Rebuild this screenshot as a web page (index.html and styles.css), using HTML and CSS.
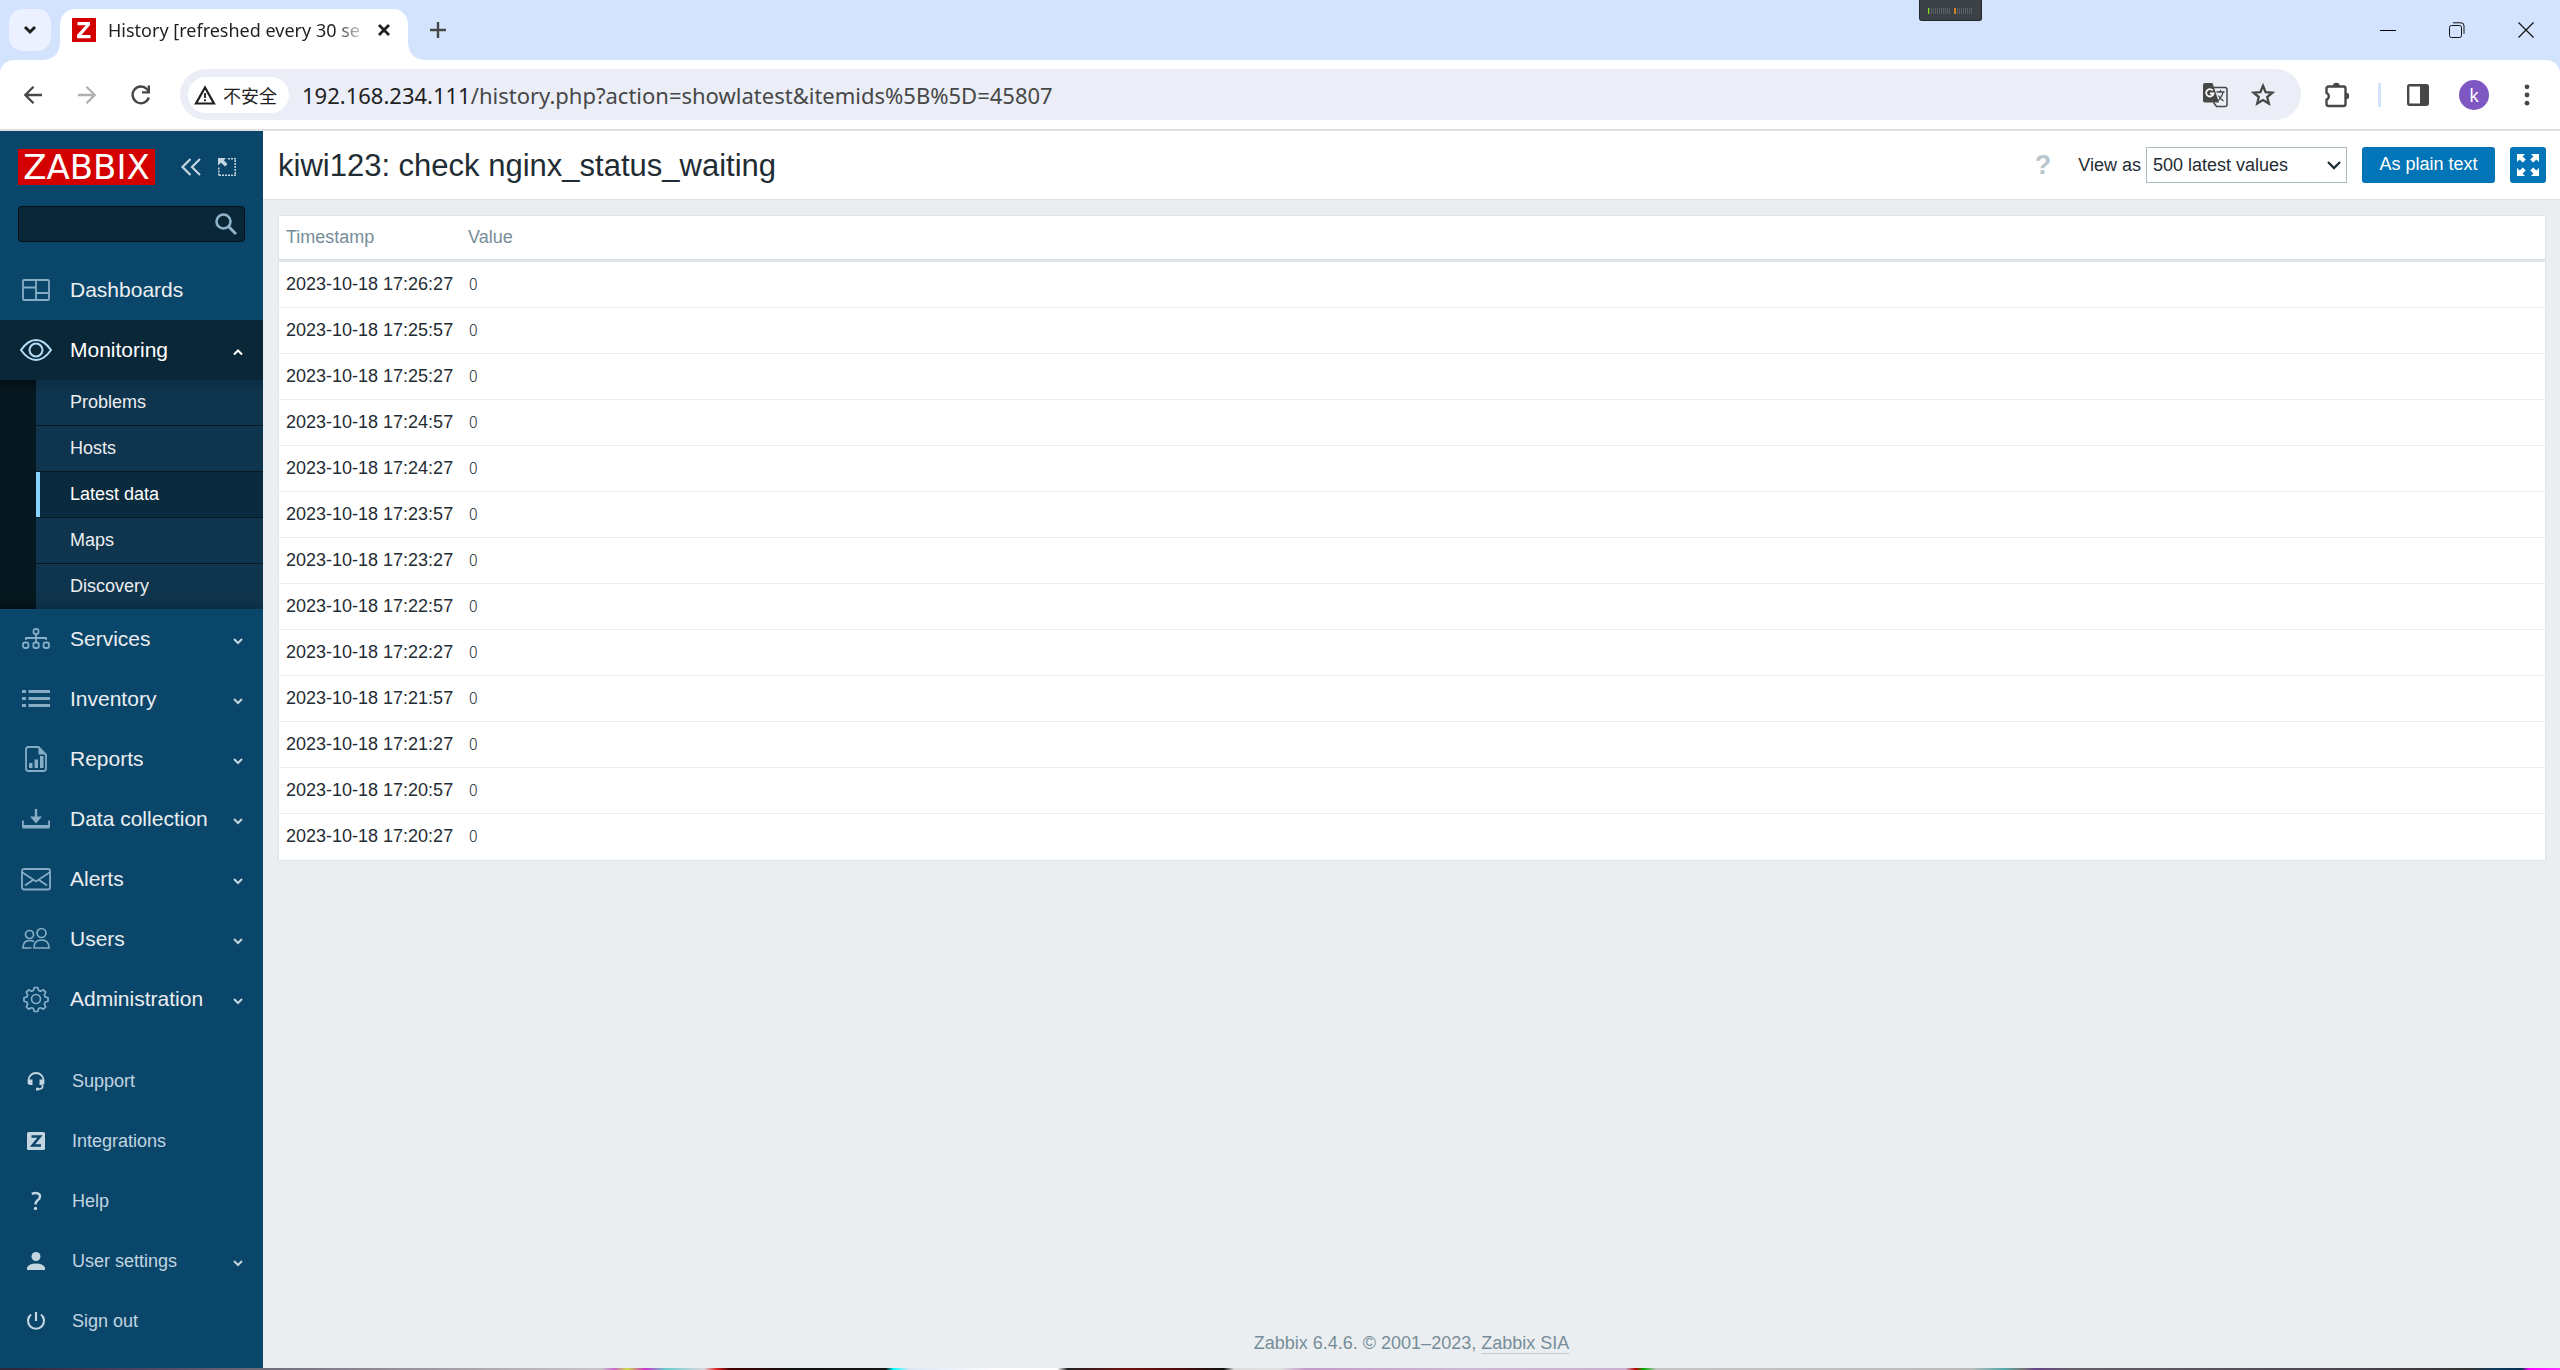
FILE: index.html
```html
<!DOCTYPE html>
<html lang="zh-CN">
<head>
<meta charset="utf-8">
<title>History [refreshed every 30 sec.]</title>
<link rel="stylesheet" href="styles.css">
</head>
<body>
<header class="tabstrip">
  <button class="tab-search" aria-label="Search tabs"><svg width="16" height="16" viewBox="0 0 16 16"><path d="M3 5l5 5 5-5" fill="none" stroke="#1f1f1f" stroke-width="3"/></svg></button>
  <div class="tab">
    <svg class="favicon" width="24" height="24" viewBox="0 0 24 24"><path fill="#d40000" d="M0 0h24v24H0z"/><path fill="#fff" d="M5.500 4h12.500v3L9.500 17H18.500v3.200H5v-3.200L13.700 7.200H5.500z"/></svg>
    <span class="tab-title">History [refreshed every 30 se</span>
    <button class="tab-close" aria-label="Close tab"><svg width="14" height="14" viewBox="0 0 14 14"><path d="M2 2l10 10M12 2L2 12" stroke="#1f1f1f" stroke-width="2.800"/></svg></button>
  </div>
  <button class="new-tab" aria-label="New tab"><svg width="16" height="16" viewBox="0 0 16 16"><path d="M8 0v16M0 8h16" stroke="#474747" stroke-width="2.400"/></svg></button>
  <div class="window-controls">
    <button aria-label="Minimize"><svg width="16" height="16" viewBox="0 0 16 16"><path d="M0 8.500h16" stroke="#000"/></svg></button>
    <button aria-label="Restore"><svg width="16" height="16" viewBox="0 0 16 16"><g fill="none" stroke="#111"><rect x=".5" y="3.500" width="12" height="12" rx="2"/><path d="M4 .8h8q3 0 3 3v8"/></g></svg></button>
    <button aria-label="Close"><svg width="16" height="16" viewBox="0 0 16 16"><path d="M.5.5l15 15M15.500.5l-15 15" stroke="#111" stroke-width="1.200"/></svg></button>
  </div>
  <div class="meter"><svg width="46" height="6" viewBox="0 0 46 6"><path d="M3.500 0v6M5.500 0v6M7.500 0v6M9.500 0v6M11.500 0v6M13.500 0v6M15.500 0v6M17.500 0v6M19.500 0v6M21.500 0v6M29.500 0v6M31.500 0v6M33.500 0v6M35.500 0v6M37.500 0v6M39.500 0v6M41.500 0v6M43.500 0v6" stroke="#5b6067"/><path d="M.5 0v6" stroke="#86e01e" stroke-width="1.500"/><path d="M27 0v6" stroke="#ff9d1c" stroke-width="1.500"/></svg></div>
</header>

<div class="toolbar-wrap">
<div class="toolbar">
  <button aria-label="Back"><svg width="20" height="20" viewBox="0 0 20 20"><path d="M19 10H2.500M10.500 1.800L2.300 10l8.200 8.200" fill="none" stroke="#474747" stroke-width="2.300"/></svg></button>
  <button aria-label="Forward"><svg width="20" height="20" viewBox="0 0 20 20"><path d="M1 10h16.500M9.500 1.800l8.200 8.200-8.200 8.200" fill="none" stroke="#b0b0b0" stroke-width="2.300"/></svg></button>
  <button aria-label="Reload"><svg width="20" height="20" viewBox="0 0 20 20"><path d="M17.800 12.500A8.300 8.300 0 1 1 16 4.200L18 6.500" fill="none" stroke="#474747" stroke-width="2.400"/><path d="M19 .5v8h-8V6.200h5.600V.5z" fill="#474747"/></svg></button>
  <div class="omnibox">
    <button class="site-info"><svg width="22" height="20" viewBox="0 0 22 20"><path d="M11 2.500L20 18.500H2z" fill="none" stroke="#1f1f1f" stroke-width="2.200"/><path d="M11 8v5M11 14.300v2" stroke="#1f1f1f" stroke-width="1.800"/></svg>不安全</button>
    <div class="url"><b>192.168.234.111</b>/history.php?action=showlatest&amp;itemids%5B%5D=45807</div>
    <button aria-label="Translate"><svg width="26" height="26" viewBox="0 0 26 26"><path d="M3 1h7.500l6.500 19.500H3q-2 0-2-2V3q0-2 2-2z" fill="#474747"/><path d="M11.500 5.500H23q2 0 2 2v15q0 2-2 2h-8.500l-3-4" fill="none" stroke="#474747" stroke-width="1.500"/><path d="M10.800 8.500A3.700 3.700 0 1 0 11.500 11.500H8" fill="none" stroke="#fff" stroke-width="1.800"/><path d="M14.500 10h8M18.500 8v2M21 10c-.7 4-3 7-5.500 9M16.500 13.500c1 2.300 2.500 4 5 5.500" fill="none" stroke="#474747" stroke-width="1.300"/></svg></button>
    <button aria-label="Bookmark"><svg width="24" height="24" viewBox="0 0 24 24"><path d="M12 2.800l2.600 6.300 6.800.5-5.200 4.400 1.600 6.600L12 17.100l-5.800 3.500L7.800 14 2.600 9.600l6.800-.5z" fill="none" stroke="#474747" stroke-width="2.300"/></svg></button>
  </div>
  <button class="extensions" aria-label="Extensions"><svg width="26" height="26" viewBox="0 0 26 26"><path d="M4.500 4.500h15q2 0 2 2V22q0 2-2 2h-15q-2 0-2-2v-4.300a3.600 3.600 0 0 0 0-6.700V6.500q0-2 2-2z" fill="none" stroke="#474747" stroke-width="2.400"/><path d="M9 4a3.300 3.300 0 0 1 6.600 0zM22 10.800a3.200 3.200 0 0 1 0 6.400z" fill="#474747"/></svg></button>
  <span class="divider"></span>
  <button aria-label="Side panel"><svg width="22" height="22" viewBox="0 0 22 22"><rect x="1.200" y="1.200" width="19.600" height="19.600" rx="1.500" fill="none" stroke="#474747" stroke-width="2.400"/><path d="M13 1h8v20h-8z" fill="#474747"/></svg></button>
  <button class="avatar">k</button>
  <button aria-label="Menu"><svg width="6" height="22" viewBox="0 0 6 22"><g fill="#474747"><circle cx="3" cy="2.800" r="2.400"/><circle cx="3" cy="11" r="2.400"/><circle cx="3" cy="19.200" r="2.400"/></g></svg></button>
</div>
</div>

<div class="app">
<aside class="sidebar">
  <div class="brand">
    <a class="logo" href="#">ZABBIX</a>
    <button aria-label="Collapse sidebar"><svg width="22" height="18" viewBox="0 0 22 18"><path d="M10.500 1l-8 8 8 8M20 1l-8 8 8 8" fill="none" stroke="#c3d5e0" stroke-width="2.200"/></svg></button>
    <button aria-label="Hide sidebar"><svg width="18" height="18" viewBox="0 0 18 18"><path d="M0 0h8L5.800 2.200 9.500 6 7 8.500 3 4.800 0 7.500z" fill="#c3d5e0"/><path d="M10 .8h8M17.200 2v16M18 17.200H0M.8 9.500V18" fill="none" stroke="#c3d5e0" stroke-width="1.500" stroke-dasharray="2 1"/></svg></button>
  </div>
  <form class="search">
    <input type="text" aria-label="Search">
    <button type="button" aria-label="Search"><svg width="22" height="22" viewBox="0 0 22 22"><circle cx="8.500" cy="8.500" r="7" fill="none" stroke="#8fb3cb" stroke-width="2.600"/><path d="M13.500 13.500l7.500 7.500" stroke="#8fb3cb" stroke-width="3"/></svg></button>
  </form>
  <nav class="menu">
    <a href="#"><svg class="icon" viewBox="0 0 32 32"><g fill="none" stroke="#86adc6" stroke-width="1.800"><rect x="3" y="6" width="26" height="20" rx="1"/><path d="M16 6v20M3 13.500h13M16 19h13"/></g></svg><span>Dashboards</span></a>
    <a href="#" class="open"><svg class="icon" viewBox="0 0 32 32"><g fill="none" stroke="#b2dcf5" stroke-width="2.100"><path d="M1 16Q8 6 16 6t15 10Q24 26 16 26T1 16z"/><circle cx="16" cy="16" r="6.500"/></g></svg><span>Monitoring</span><svg class="caret" viewBox="0 0 10 8"><path d="M1 6.500l4-4 4 4"/></svg></a>
    <ul class="submenu">
      <li><a href="#">Problems</a></li>
      <li><a href="#">Hosts</a></li>
      <li><a href="#" class="selected">Latest data</a></li>
      <li><a href="#">Maps</a></li>
      <li><a href="#">Discovery</a></li>
    </ul>
    <a href="#"><svg class="icon" viewBox="0 0 32 32"><g fill="none" stroke="#86adc6" stroke-width="1.800"><rect x="13.500" y="6" width="5" height="5" rx="2"/><rect x="3" y="19.500" width="5.500" height="5.500" rx="2"/><rect x="13.300" y="19.500" width="5.500" height="5.500" rx="2"/><rect x="23.500" y="19.500" width="5.500" height="5.500" rx="2"/><path d="M16 11v8M6 17v-2h20v2"/></g></svg><span>Services</span><svg class="caret" viewBox="0 0 10 8"><path d="M1 2l4 4 4-4"/></svg></a>
    <a href="#"><svg class="icon" viewBox="0 0 32 32"><path d="M2 8.500h4M2 15.500h4M2 22.500h4M8.500 8.500H30M8.500 15.500H30M8.500 22.500H30" stroke="#86adc6" stroke-width="3"/></svg><span>Inventory</span><svg class="caret" viewBox="0 0 10 8"><path d="M1 2l4 4 4-4"/></svg></a>
    <a href="#"><svg class="icon" viewBox="0 0 32 32"><path d="M18.500 4H8.500q-2.500 0-2.500 2.500v19q0 2.500 2.500 2.500h15q2.500 0 2.500-2.500v-14z" fill="none" stroke="#86adc6" stroke-width="1.800"/><path d="M18.500 4v7.500H26zM9 20h3.500v5H9zM14.500 16.500H18V25h-3.500zM20 13h3.500v12H20z" fill="#86adc6"/></svg><span>Reports</span><svg class="caret" viewBox="0 0 10 8"><path d="M1 2l4 4 4-4"/></svg></a>
    <a href="#"><svg class="icon" viewBox="0 0 32 32"><path d="M14.800 6h2.400v7.500H22l-6 7-6-7h4.800zM2 17.500h1.800v4.500h24.400v-4.500H30V24q0 1.500-1.500 1.500h-25Q2 25.500 2 24z" fill="#86adc6"/></svg><span>Data collection</span><svg class="caret" viewBox="0 0 10 8"><path d="M1 2l4 4 4-4"/></svg></a>
    <a href="#"><svg class="icon" viewBox="0 0 32 32"><g fill="none" stroke="#86adc6" stroke-width="1.800"><rect x="2" y="6" width="28" height="20.500" rx="2"/><path d="M2.500 9.500L16 18.500 29.500 9.500M5 22.500l8-5.500M27 22.500L19 17"/></g></svg><span>Alerts</span><svg class="caret" viewBox="0 0 10 8"><path d="M1 2l4 4 4-4"/></svg></a>
    <a href="#"><svg class="icon" viewBox="0 0 32 32"><g fill="none" stroke="#86adc6" stroke-width="1.700"><circle cx="9.500" cy="11.500" r="4"/><circle cx="21.500" cy="10" r="4.500"/><path d="M14 25h15q0-8-7.500-8T14 25zM11.500 25H3q0-7.500 6.500-7.500 2.500 0 4.500 1"/></g></svg><span>Users</span><svg class="caret" viewBox="0 0 10 8"><path d="M1 2l4 4 4-4"/></svg></a>
    <a href="#"><svg class="icon" viewBox="0 0 32 32"><g fill="none" stroke="#86adc6" stroke-width="1.700"><circle cx="16" cy="16" r="4.500"/><path d="M14.300 5h3.400l.9 2.900 2 .8 2.700-1.400 2.400 2.400-1.400 2.700.8 2 2.900.9v3.400l-2.900.9-.8 2 1.400 2.700-2.400 2.400-2.700-1.400-2 .8-.9 2.900h-3.400l-.9-2.900-2-.8-2.700 1.400-2.400-2.400 1.400-2.700-.8-2-2.900-.9v-3.400l2.900-.9.8-2-1.400-2.700 2.400-2.400 2.700 1.400 2-.8z" transform="translate(0 -.5)" stroke-linejoin="round"/></g></svg><span>Administration</span><svg class="caret" viewBox="0 0 10 8"><path d="M1 2l4 4 4-4"/></svg></a>
  </nav>
  <nav class="menu user-menu">
    <a href="#"><svg class="icon" viewBox="0 0 32 32"><path d="M8.500 19v-3.500a7.500 7.500 0 0 1 15 0V19M22.500 20v2q0 2-5 2.200" fill="none" stroke="#c3d5e0" stroke-width="1.800"/><path d="M8 14.500h4.500V20H10q-2 0-2-2zM24 14.500h-4.500V20H22q2 0 2-2zM16 22.800h3v2.600h-3z" fill="#c3d5e0"/></svg><span>Support</span></a>
    <a href="#"><svg class="icon" viewBox="0 0 32 32"><rect x="7" y="7" width="18" height="18" rx="1.500" fill="#c3d5e0"/><path d="M11.500 11.500h8.500L12.500 20.500H21" fill="none" stroke="#0a466a" stroke-width="2.500"/></svg><span>Integrations</span></a>
    <a href="#"><svg class="icon" viewBox="0 0 32 32"><path d="M11.800 9Q14 7.800 16 8q4 .3 4 3.600 0 2-2.300 3.700-2.100 1.700-2.100 4.200" fill="none" stroke="#c3d5e0" stroke-width="2.400"/><circle cx="15.500" cy="23.500" r="1.700" fill="#c3d5e0"/></svg><span>Help</span></a>
    <a href="#"><svg class="icon" viewBox="0 0 32 32"><circle cx="16" cy="11.500" r="4.500" fill="#c3d5e0"/><path d="M7 25v-2.500Q9 18.500 16 18.500t9 4V25z" fill="#c3d5e0"/></svg><span>User settings</span><svg class="caret" viewBox="0 0 10 8"><path d="M1 2l4 4 4-4"/></svg></a>
    <a href="#"><svg class="icon" viewBox="0 0 32 32"><path d="M11 9.500a8 8 0 1 0 10 0" fill="none" stroke="#c3d5e0" stroke-width="2.100"/><path d="M16 7v9" stroke="#c3d5e0" stroke-width="2.200"/></svg><span>Sign out</span></a>
  </nav>
</aside>

<main class="main">
  <div class="page-header">
    <h1>kiwi123: check nginx_status_waiting</h1>
    <form class="controls">
      <a class="help" href="#" aria-label="Help">?</a>
      <label for="view-as">View as</label>
      <span class="select"><select id="view-as"><option>500 latest values</option></select><svg width="16" height="12" viewBox="0 0 16 12"><path d="M2 3l6 6 6-6" fill="none" stroke="#1f2c33" stroke-width="2.300"/></svg></span>
      <button type="button" class="btn">As plain text</button>
      <button type="button" class="btn kiosk" aria-label="Kiosk mode"><svg width="22" height="22" viewBox="0 0 22 22"><path fill="#fff" d="M0 0h8L5.600 2.400 8.800 5.600 5.800 8.600 2.600 5.400 0 8zM22 0v8L19.400 5.400 16.200 8.600 13.200 5.600 16.400 2.400 14 0zM0 22v-8l2.600 2.600 3.200-3.200 3 3L5.600 19.600 8 22zM22 22h-8l2.400-2.400-3.200-3.200 3-3 3.200 3.200L22 14z"/></svg></button>
    </form>
  </div>
  <table class="history">
    <thead><tr><th class="time">Timestamp</th><th>Value</th></tr></thead>
    <tbody>
      <tr><td>2023-10-18 17:26:27</td><td class="value">0</td></tr>
      <tr><td>2023-10-18 17:25:57</td><td class="value">0</td></tr>
      <tr><td>2023-10-18 17:25:27</td><td class="value">0</td></tr>
      <tr><td>2023-10-18 17:24:57</td><td class="value">0</td></tr>
      <tr><td>2023-10-18 17:24:27</td><td class="value">0</td></tr>
      <tr><td>2023-10-18 17:23:57</td><td class="value">0</td></tr>
      <tr><td>2023-10-18 17:23:27</td><td class="value">0</td></tr>
      <tr><td>2023-10-18 17:22:57</td><td class="value">0</td></tr>
      <tr><td>2023-10-18 17:22:27</td><td class="value">0</td></tr>
      <tr><td>2023-10-18 17:21:57</td><td class="value">0</td></tr>
      <tr><td>2023-10-18 17:21:27</td><td class="value">0</td></tr>
      <tr><td>2023-10-18 17:20:57</td><td class="value">0</td></tr>
      <tr><td>2023-10-18 17:20:27</td><td class="value">0</td></tr>
    </tbody>
  </table>
  <footer class="footer">Zabbix 6.4.6. © 2001–2023, <a href="#">Zabbix SIA</a></footer>
</main>
</div>
<div class="desktop-edge"></div>
</body>
</html>
```
FILE: styles.css
```css
* { box-sizing: border-box; }
body {
  margin: 0;
  min-height: 100vh;
  display: flex;
  flex-direction: column;
  font: 18px/24px "Liberation Sans", Arial, sans-serif;
  color: #1f2c33;
  background: #ebeef0;
}
button { border: 0; padding: 0; background: none; font: inherit; color: inherit; display: flex; align-items: center; justify-content: center; }
a { text-decoration: none; color: inherit; }
svg { display: block; flex: none; }

/* Browser tab strip */
.tabstrip {
  position: relative;
  display: flex;
  height: 60px;
  padding: 9px 0 0 9px;
  background: #d3e3fd;
  font-family: "Noto Sans", "Noto Sans CJK SC", sans-serif;
}
.tab-search { width: 42px; height: 42px; border-radius: 14px; background: #ebf1fe; }
.tab {
  position: relative;
  display: flex;
  align-items: center;
  width: 348px;
  margin-left: 9px;
  padding: 0 17px 9px 12px;
  border-radius: 15px 15px 0 0;
  background: #fff;
}
.tab::before, .tab::after { content: ""; position: absolute; bottom: 0; width: 15px; height: 15px; }
.tab::before { right: 100%; background: radial-gradient(circle at 0 0, transparent 14px, #fff 15px); }
.tab::after { left: 100%; background: radial-gradient(circle at 100% 0, transparent 14px, #fff 15px); }
.tab-title {
  flex: 1;
  margin: 0 12px;
  white-space: nowrap;
  color: transparent;
  background: linear-gradient(90deg, #1f1f1f 88%, #e8e8e8);
  -webkit-background-clip: text;
  background-clip: text;
}
.new-tab { width: 60px; height: 42px; }
.window-controls { display: flex; margin-left: auto; }
.window-controls button { width: 69px; height: 42px; }
.meter {
  position: absolute;
  left: 75%;
  top: 0;
  width: 63px;
  height: 21px;
  margin-left: -1px;
  padding: 8px;
  border: solid #24272c;
  border-width: 0 1px 1px;
  border-radius: 0 0 3px 3px;
  background: #3c4047;
}

/* Browser toolbar */
.toolbar-wrap { background: #d3e3fd; }
.toolbar {
  display: flex;
  align-items: center;
  height: 71px;
  padding: 0 30px 0 23px;
  border-bottom: 2px solid #e0e0e0;
  border-radius: 14px 14px 0 0;
  background: #fff;
  gap: 34px;
  font-family: "Noto Sans", "Noto Sans CJK SC", sans-serif;
}
.omnibox {
  flex: 1;
  display: flex;
  align-items: center;
  height: 51px;
  margin-left: -5px;
  padding: 0 26px 0 8px;
  border-radius: 26px;
  background: #ebeef7;
  gap: 23px;
}
.site-info { height: 36px; padding: 0 12px 0 6px; gap: 7px; border-radius: 18px; background: #fff; color: #1f1f1f; font-family: "Noto Sans CJK SC", sans-serif; }
.url { flex: 1; margin-left: -10px; font-size: 22px; color: #474747; white-space: nowrap; }
.url b { font-weight: normal; color: #1f1f1f; }
.extensions { margin-left: -11px; }
.divider { width: 3px; height: 24px; margin: 0 -8px 0 -6px; background: #d3e3fd; }
.avatar { width: 30px; height: 30px; margin: 0 1px 0 -4px; border-radius: 50%; background: #7e57c2; color: #fff; }

/* Sidebar */
.app { flex: 1; display: flex; }
.sidebar { width: 263px; padding-top: 18px; display: flex; flex-direction: column; background: #0a466a; color: #c3d5e0; }
.brand { display: flex; align-items: center; padding-left: 18px; }
.logo { width: 137px; height: 36px; margin-right: 25px; background: #d40000; color: #fff; font: 34px/36px "DejaVu Sans", sans-serif; text-align: center; }
.brand button + button { margin-left: 16px; }
.search { display: flex; height: 36px; margin: 21px 18px 18px; padding-right: 7px; border: 1px solid #040e14; border-radius: 4px; background: #0a2737; }
.search input { flex: 1; min-width: 0; border: 0; background: none; color: #fff; font: inherit; outline: 0; }
.menu > a { display: flex; align-items: center; height: 60px; padding: 0 20px; color: #ebeef0; font-size: 21px; }
.menu > a span { flex: 1; margin-left: 18px; }
.menu > a.open { background: #0a2737; color: #fff; }
.icon { width: 32px; height: 32px; }
.caret { width: 10px; height: 8px; margin-top: 4px; fill: none; stroke: #c3d5e0; stroke-width: 2; }
.open .caret { stroke: #fff; }
.submenu { margin: 0; padding: 0 0 0 36px; list-style: none; background: linear-gradient(#040f16, #05171f 12px, #05171f 217px, #040f16); }
.submenu li + li { border-top: 1px solid #05171f; }
.submenu a { display: block; height: 45px; padding-left: 30px; border-left: 4px solid transparent; background: #0f344d; color: #ebeef0; line-height: 45px; }
.submenu li:first-child a { background: linear-gradient(#0d2e44, #0f344d 12px); background-origin: border-box; }
.submenu li:last-child a { background: linear-gradient(#0f344d 33px, #0d2e44); background-origin: border-box; }
.submenu a.selected { border-left-color: #87d2ff; background: #0a2a3d; color: #fff; }
.user-menu { margin-top: auto; padding: 22px 0 17px; }
.user-menu > a { color: #c3d5e0; font-size: 18px; }
.user-menu > a span { margin-left: 20px; }

/* Page */
.main { flex: 1; display: flex; flex-direction: column; }
.page-header { display: flex; align-items: center; justify-content: space-between; height: 69px; padding: 0 14px 0 15px; border-bottom: 1px solid #dfe4e7; background: #fff; }
h1 { margin: 0; padding-top: 2px; font-size: 31px; font-weight: normal; line-height: 36px; }
.controls { display: flex; align-items: center; }
.help { margin-right: 27px; color: #b9c5cc; font-size: 27px; font-weight: bold; }
.select { position: relative; margin: 0 15px 0 5px; }
.select select { display: block; width: 201px; height: 36px; padding: 0 6px; border: 1px solid #acbbc2; border-radius: 0; background: #fff; appearance: none; font: inherit; color: inherit; }
.select svg { position: absolute; right: 5px; top: 12px; pointer-events: none; }
.btn { height: 36px; padding: 0 17px 2px; border-radius: 3px; background: #0275b8; color: #fff; }
.btn:not(.kiosk) { min-width: 133px; }
.kiosk { width: 36px; margin-left: 15px; padding: 0; }
.history { margin: 15px 14px 0 15px; border: 1px solid #dfe4e7; border-collapse: separate; border-spacing: 0; background: #fff; }
.history th { height: 46px; padding: 0 7px 2px; border-bottom: 3px solid #dce2e5; color: #768d99; font-weight: normal; text-align: left; }
.history .time { width: 182px; }
.history td { height: 46px; padding: 0 7px 2px; border-bottom: 1px solid #ebeef0; white-space: nowrap; }
.history tr:last-child td { border-bottom: 0; }
.history .value { padding: 0 8px 4px; font-family: "Noto Sans CJK SC", sans-serif; font-size: 16px; font-weight: 300; }
.footer { margin-top: auto; padding-bottom: 13px; color: #768d99; text-align: center; }
.footer a { border-bottom: 1px solid #c0cacf; }

/* Sliver of the desktop below the window */
.desktop-edge {
  height: 2px;
  background: linear-gradient(90deg, #2c2638, #4b4060 5%, #6d6a78 10%, #b5b0b5 20%, #c8c4c8 23.500%, #c6c 24%, #cd4 24.500%, #c3c 25.200%, #6cc 26%, #dcd8de 27.500%, #d22 28%, #400 28.500%, #111 31%, #151515 34.600%, #0ff 34.900%, #dce6f4 35.500%, #fff 39%, #fff 41.300%, #222 41.700%, #701010 44%, #500c0c 46%, #111 47.800%, #ddd 48.200%, #e0e0e0 50%, #c49ac8 51%, #cdb8d2 57%, #cbb0cf 63.500%, #b00 63.900%, #0a0 64.200%, #c4c4c4 64.700%, #bbb 77%, #5aa 78.300%, #777 79%, #648 79.500%, #656068 81%, #4a444e 92%, #333 96.500%, #0b3a5c 97.500%, #083050 98.500%, #f0f 98.800%, #f3f);
}
```
